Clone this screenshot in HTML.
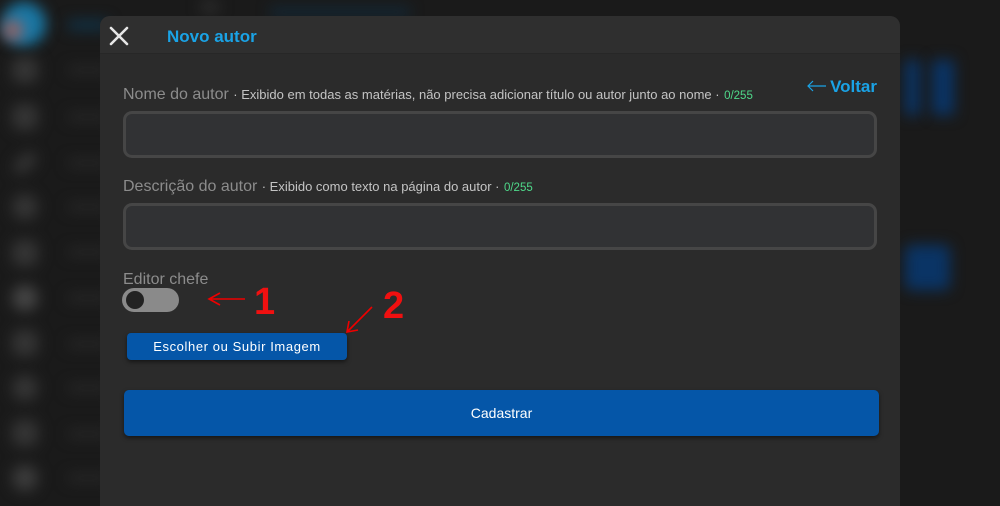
<!DOCTYPE html>
<html><head><style>
*{margin:0;padding:0;box-sizing:border-box}
body{width:1000px;height:500px;overflow:hidden;background:#1a1a1a;font-family:"Liberation Sans",sans-serif;position:relative}
.bg{position:absolute;filter:blur(7px)}
.ic{position:absolute;left:12px;width:26px;height:26px;border-radius:8px;background:#353535}
.tx{position:absolute;left:68px;width:40px;height:8px;background:#282828}
.modal{position:absolute;left:100px;top:16px;width:800px;height:490px;background:#2b2b2b;border-radius:10px 10px 0 0;overflow:hidden}
.hd{height:38px;background:#2f2f2f;border-bottom:1px solid #272727;position:relative}
.title{position:absolute;left:67px;top:11px;color:#1aa3e6;font-weight:bold;font-size:17px}
.lbl{position:absolute;left:23px;color:#8c8c8c;font-size:16px;white-space:nowrap}
.lbl small{font-size:13px;color:#c4c4c4}
.lbl .c{color:#4fd98a;font-size:11.5px}
.inp{position:absolute;left:23px;width:754px;height:47px;border:3px solid #464646;border-radius:9px;background:#313234}
</style></head><body>
<div class="bg" style="left:2px;top:2px;width:44px;height:44px;border-radius:50%;background:#1a78a5"></div>
<div class="bg" style="left:3px;top:20px;width:20px;height:20px;border-radius:50%;background:#9a6262"></div>
<div class="bg" style="left:68px;top:20px;width:40px;height:10px;background:#103348"></div>
<div class="bg" style="left:200px;top:0;width:20px;height:14px;border-radius:50%;background:#2c2c2c"></div>
<div class="bg" style="left:270px;top:8px;width:140px;height:8px;background:#112b3d"></div>
<div class="bg">
<div class="ic" style="top:57px"></div><div class="tx" style="top:66px"></div>
<div class="ic" style="top:104px"></div><div class="tx" style="top:113px"></div>
<div class="ic" style="top:156px;height:14px;transform:rotate(-40deg)"></div><div class="tx" style="top:159px"></div>
<div class="ic" style="top:194px;border-radius:50%"></div><div class="tx" style="top:203px"></div>
<div class="ic" style="top:240px"></div><div class="tx" style="top:248px"></div>
<div class="ic" style="top:285px;border-radius:50%;background:#454545"></div><div class="tx" style="top:294px"></div>
<div class="ic" style="top:330px"></div><div class="tx" style="top:340px"></div>
<div class="ic" style="top:375px;border-radius:50%"></div><div class="tx" style="top:384px"></div>
<div class="ic" style="top:420px"></div><div class="tx" style="top:430px"></div>
<div class="ic" style="top:465px;border-radius:50%;background:#3c3c3c"></div><div class="tx" style="top:474px"></div>
</div>
<div class="bg" style="left:905px;top:60px;width:15px;height:55px;background:#0a3465"></div>
<div class="bg" style="left:932px;top:60px;width:22px;height:55px;background:#0a3465"></div>
<div class="bg" style="left:905px;top:245px;width:45px;height:45px;background:#0a3465;border-radius:6px"></div>

<div class="modal">
<div class="hd">
<svg style="position:absolute;left:9px;top:10px" width="20" height="20" viewBox="0 0 20 20"><path d="M2 2L18 18M18 2L2 18" stroke="#e6e6e6" stroke-width="2.6" stroke-linecap="round"/></svg>
<div class="title">Novo autor</div>
</div>
<svg style="position:absolute;left:707px;top:64px" width="20" height="12"><path d="M1 6H19M6 1L1 6L6 11" stroke="#1aa3e6" stroke-width="1.2" fill="none"/></svg>
<div style="position:absolute;right:23px;top:61px;color:#1aa3e6;font-size:17px;font-weight:bold">Voltar</div>
<div class="lbl" style="top:70px">Nome do autor <small>· Exibido em todas as matérias, não precisa adicionar título ou autor junto ao nome ·</small> <span class="c">0/255</span></div>
<div class="inp" style="top:95px"></div>
<div class="lbl" style="top:162px">Descrição do autor <small>· Exibido como texto na página do autor ·</small> <span class="c">0/255</span></div>
<div class="inp" style="top:187px"></div>
<div class="lbl" style="top:255px">Editor chefe</div>
<div style="position:absolute;left:22px;top:272px;width:57px;height:24px;border-radius:12px;background:#8a8a8a"><div style="position:absolute;left:4px;top:3px;width:18px;height:18px;border-radius:50%;background:#222"></div></div>
<div style="position:absolute;left:27px;top:317px;width:220px;height:27px;background:#0556a8;border-radius:4px;color:#fff;font-size:13px;letter-spacing:.6px;text-align:center;line-height:27px;box-shadow:0 2px 4px rgba(0,0,0,.5)">Escolher ou Subir Imagem</div>
<div style="position:absolute;left:24px;top:374px;width:755px;height:46px;background:#0556a8;border-radius:5px;color:#fff;font-size:14px;text-align:center;line-height:46px;box-shadow:0 2px 4px rgba(0,0,0,.5)">Cadastrar</div>
</div>
<svg style="position:absolute;left:0;top:0" width="1000" height="500">
<path d="M245 299H210M220 293L209 299L220 305" stroke="#e00" stroke-width="1.6" fill="none"/>
<text x="254" y="314" fill="#f01010" font-family="Liberation Sans" font-weight="bold" font-size="38">1</text>
<path d="M372 307L348 331M349 321L347 332L358 330" stroke="#e00" stroke-width="1.6" fill="none"/>
<text x="383" y="318" fill="#f01010" font-family="Liberation Sans" font-weight="bold" font-size="38">2</text>
</svg>
</body></html>
